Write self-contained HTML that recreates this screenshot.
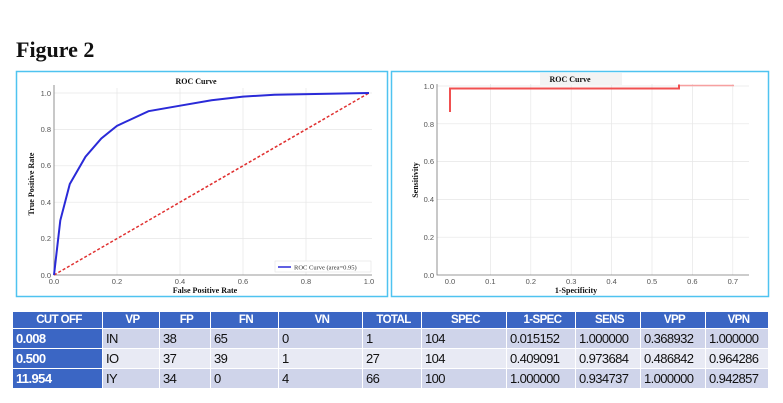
<!DOCTYPE html>
<html><head><meta charset="utf-8"><style>
html,body{margin:0;padding:0;background:#fff;}
body{width:783px;height:403px;position:relative;overflow:hidden;}
svg{position:absolute;left:0;top:0;}
table{position:absolute;left:12px;top:311px;border-collapse:collapse;font-family:"Liberation Sans Narrow","Liberation Sans",sans-serif;font-size:13px;letter-spacing:-0.6px;table-layout:fixed;}
td{padding:0 0 0 3px;height:19px;border:1px solid #fff;white-space:nowrap;color:#111;overflow:hidden;}
tr.h td{background:#3b66c4;color:#fff;text-align:center;font-weight:bold;height:16px;font-size:11.5px;}
td.c{background:#3b66c4;color:#fff;font-weight:bold;}
tr.a td{background:#cfd4ea;}
tr.b td{background:#e8eaf4;}
tr.a td.c,tr.b td.c{background:#3b66c4;}
</style></head><body>
<svg width="783" height="403" viewBox="0 0 783 403" font-family="Liberation Sans, sans-serif">
<text x="16" y="57" font-family="Liberation Serif, serif" font-weight="bold" font-size="22" fill="#111">Figure 2</text>
<rect x="16.5" y="71.5" width="371" height="225" fill="#fff" stroke="#4fc3f0" stroke-width="1.5"/>
<g stroke="#e6e6e6" stroke-width="0.7">
<line x1="117" y1="88" x2="117" y2="275"/><line x1="180" y1="88" x2="180" y2="275"/><line x1="243" y1="88" x2="243" y2="275"/><line x1="306" y1="88" x2="306" y2="275"/>
<line x1="54" y1="93" x2="372" y2="93"/><line x1="54" y1="129.4" x2="372" y2="129.4"/><line x1="54" y1="165.8" x2="372" y2="165.8"/><line x1="54" y1="202.2" x2="372" y2="202.2"/><line x1="54" y1="238.6" x2="372" y2="238.6"/>
</g>
<polyline points="54,85 54,275 372,275" fill="none" stroke="#777" stroke-width="0.8"/>
<g font-size="7.5" fill="#555" text-anchor="end">
<text x="51" y="96">1.0</text><text x="51" y="132">0.8</text><text x="51" y="168">0.6</text><text x="51" y="205">0.4</text><text x="51" y="241">0.2</text><text x="51" y="278">0.0</text></g>
<g font-size="7.5" fill="#555" text-anchor="middle">
<text x="54" y="284">0.0</text><text x="117" y="284">0.2</text><text x="180" y="284">0.4</text><text x="243" y="284">0.6</text><text x="306" y="284">0.8</text><text x="369" y="284">1.0</text></g>
<text x="196" y="84" font-family="Liberation Serif, serif" font-weight="bold" font-size="8" text-anchor="middle" fill="#111">ROC Curve</text>
<text x="205" y="293" font-family="Liberation Serif, serif" font-weight="bold" font-size="8" text-anchor="middle" fill="#111">False Positive Rate</text>
<text transform="translate(34,184) rotate(-90)" font-family="Liberation Serif, serif" font-weight="bold" font-size="8" text-anchor="middle" fill="#111">True Positive Rate</text>
<line x1="54" y1="275" x2="369" y2="93" stroke="#e03030" stroke-width="1.5" stroke-dasharray="3,2"/>
<polyline points="54,275 60.3,220.4 69.8,184 85.5,156.7 101.3,138.5 117,125.8 148.5,111.2 180,105.7 211.5,100.3 243,96.6 274.5,94.8 369,93" fill="none" stroke="#2a2ad8" stroke-width="2"/>
<rect x="275" y="261" width="96" height="11" fill="#fff" stroke="#ddd" stroke-width="0.5"/>
<line x1="278" y1="267" x2="291" y2="267" stroke="#2a2ad8" stroke-width="1.5"/>
<text x="294" y="269.5" font-family="Liberation Serif, serif" font-size="6.5" fill="#333">ROC Curve (area=0.95)</text>
<rect x="391.5" y="71.5" width="377" height="225" fill="#fff" stroke="#4fc3f0" stroke-width="1.5"/>
<g stroke="#e6e6e6" stroke-width="0.7">
<line x1="490.4" y1="84" x2="490.4" y2="275"/><line x1="530.8" y1="84" x2="530.8" y2="275"/><line x1="571.2" y1="84" x2="571.2" y2="275"/><line x1="611.6" y1="84" x2="611.6" y2="275"/><line x1="652" y1="84" x2="652" y2="275"/><line x1="692.4" y1="84" x2="692.4" y2="275"/><line x1="732.8" y1="84" x2="732.8" y2="275"/>
<line x1="437" y1="86" x2="749" y2="86"/><line x1="437" y1="123.8" x2="749" y2="123.8"/><line x1="437" y1="161.6" x2="749" y2="161.6"/><line x1="437" y1="199.4" x2="749" y2="199.4"/><line x1="437" y1="237.2" x2="749" y2="237.2"/>
</g>
<polyline points="437,84 437,275 749,275" fill="none" stroke="#777" stroke-width="0.8"/>
<g font-size="7.5" fill="#555" text-anchor="end">
<text x="434" y="89">1.0</text><text x="434" y="127">0.8</text><text x="434" y="164">0.6</text><text x="434" y="202">0.4</text><text x="434" y="240">0.2</text><text x="434" y="278">0.0</text></g>
<g font-size="7.5" fill="#555" text-anchor="middle">
<text x="450" y="284">0.0</text><text x="490.4" y="284">0.1</text><text x="530.8" y="284">0.2</text><text x="571.2" y="284">0.3</text><text x="611.6" y="284">0.4</text><text x="652" y="284">0.5</text><text x="692.4" y="284">0.6</text><text x="732.8" y="284">0.7</text></g>
<rect x="540" y="73" width="82" height="12" fill="#f3f3f3"/>
<text x="570" y="82" font-family="Liberation Serif, serif" font-weight="bold" font-size="8" text-anchor="middle" fill="#111">ROC Curve</text>
<text x="576" y="293" font-family="Liberation Serif, serif" font-weight="bold" font-size="8" text-anchor="middle" fill="#111">1-Specificity</text>
<text transform="translate(418,180) rotate(-90)" font-family="Liberation Serif, serif" font-weight="bold" font-size="8" text-anchor="middle" fill="#111">Sensitivity</text>
<polyline points="450,112 450,88.5 679,88.5 679,85.5 680,85.5" fill="none" stroke="#f05050" stroke-width="2"/>
<line x1="680" y1="85.5" x2="734" y2="85.5" stroke="#f7a0a0" stroke-width="1.5"/>
</svg>
<table>
<colgroup><col style="width:90px"><col style="width:57px"><col style="width:51px"><col style="width:68px"><col style="width:84px"><col style="width:59px"><col style="width:85px"><col style="width:69px"><col style="width:65px"><col style="width:65px"><col style="width:63px"></colgroup>
<tr class="h"><td>CUT OFF</td><td>VP</td><td>FP</td><td>FN</td><td>VN</td><td>TOTAL</td><td>SPEC</td><td>1-SPEC</td><td>SENS</td><td>VPP</td><td>VPN</td></tr>
<tr class="a"><td class="c">0.008</td><td>IN</td><td>38</td><td>65</td><td>0</td><td>1</td><td>104</td><td>0.015152</td><td>1.000000</td><td>0.368932</td><td>1.000000</td></tr>
<tr class="b"><td class="c">0.500</td><td>IO</td><td>37</td><td>39</td><td>1</td><td>27</td><td>104</td><td>0.409091</td><td>0.973684</td><td>0.486842</td><td>0.964286</td></tr>
<tr class="a"><td class="c">11.954</td><td>IY</td><td>34</td><td>0</td><td>4</td><td>66</td><td>100</td><td>1.000000</td><td>0.934737</td><td>1.000000</td><td>0.942857</td></tr>
</table>
</body></html>
